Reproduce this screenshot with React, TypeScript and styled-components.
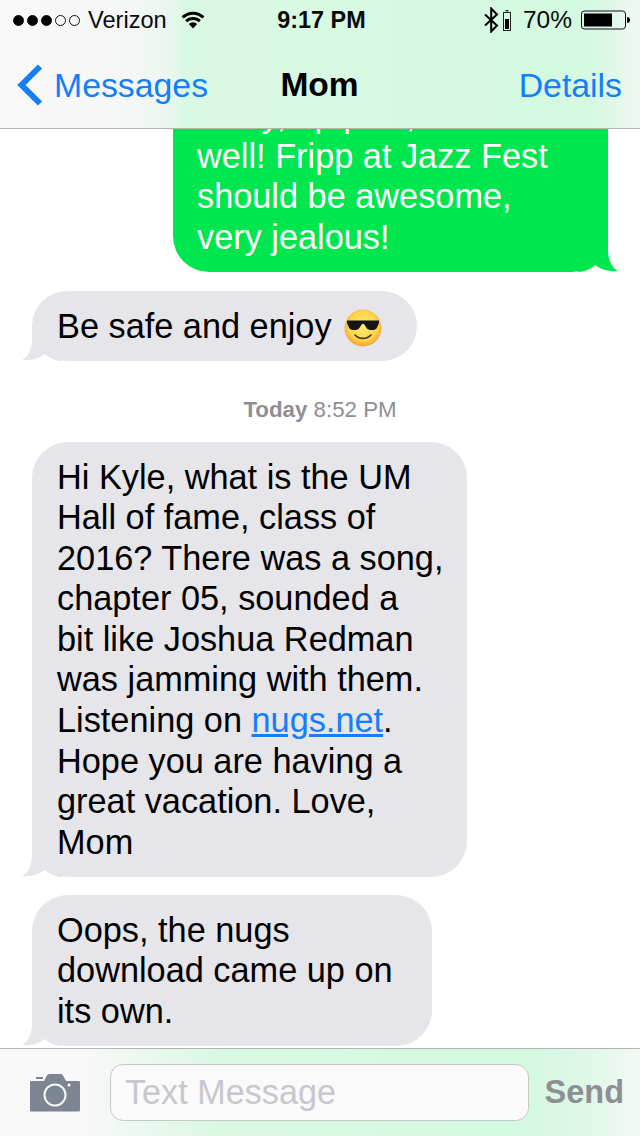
import { createGlobalStyle, styled } from "styled-components";

const GlobalStyle = createGlobalStyle`
  html, body {
    margin: 0;
    padding: 0;
    background: #fff;
  }
  body {
    font-family: "Liberation Sans", Arial, sans-serif;
  }
`;

const Phone = styled.div`
  width: 640px;
  height: 1136px;
  display: flex;
  flex-direction: column;
  overflow: hidden;
  background: #fff;
`;

const Header = styled.header`
  flex: none;
  height: 129px;
  box-sizing: border-box;
  border-bottom: 1px solid #b3b5b4;
  background: linear-gradient(90deg, #f8f8f8 0, #f5f7f6 120px, #ecf6f0 165px, #d9f8e3 185px, #d4f8e0 590px, #e0f7e8 612px, #eff8f3 640px);
`;

const StatusBar = styled.div`
  height: 40px;
  display: grid;
  grid-template-columns: 1fr auto 1fr;
  align-items: center;
  padding: 0 10px 0 13px;
  font-size: 23.6px;
  color: #0a0a0a;
`;

const StatusGroup = styled.div<{ $end?: boolean }>`
  display: flex;
  align-items: center;
  justify-content: ${(p) => (p.$end ? "flex-end" : "flex-start")};
`;

const Dot = styled.span<{ $on: boolean }>`
  width: 11px;
  height: 11px;
  box-sizing: border-box;
  margin-right: 3px;
  border-radius: 50%;
  border: 1px solid #111;
  background: ${(p) => (p.$on ? "#000" : "transparent")};
`;

const Carrier = styled.span`
  margin: 0 14px 0 5px;
`;

const Clock = styled.span`
  font-weight: 700;
  font-size: 23.4px;
`;

const Percent = styled.span`
  margin: 0 9px 0 12px;
  font-size: 24.5px;
`;

const NavBar = styled.nav`
  height: 88px;
  box-sizing: border-box;
  padding: 2px 18px 0 17px;
  display: grid;
  grid-template-columns: 1fr auto 1fr;
  align-items: center;
  font-size: 33.8px;
  color: #147efb;
`;

const BackLink = styled.div`
  display: flex;
  align-items: center;
  gap: 11px;
`;

const Title = styled.div`
  font-weight: 700;
  font-size: 33.5px;
  color: #000;
`;

const NavAction = styled.div`
  text-align: right;
`;

const Thread = styled.main`
  flex: 1;
  min-height: 0;
  overflow: hidden;
  display: flex;
  flex-direction: column;
  justify-content: flex-end;
  padding: 0 32px 2px;
`;

const Bubble = styled.div<{ $sent?: boolean; $gap?: number; $width: number }>`
  position: relative;
  z-index: 0;
  flex: none;
  box-sizing: border-box;
  width: ${(p) => p.$width}px;
  align-self: ${(p) => (p.$sent ? "flex-end" : "flex-start")};
  margin-top: ${(p) => p.$gap ?? 0}px;
  padding: 14.6px 0 14.6px ${(p) => (p.$sent ? 24 : 25)}px;
  border-radius: 36px;
  font-size: 34.3px;
  line-height: 40.6px;
  white-space: nowrap;
  color: ${(p) => (p.$sent ? "#fff" : "#000")};
  background: ${(p) => (p.$sent ? "#00e64f" : "#e5e5ea")};
`;

const Tail = styled.svg<{ $sent?: boolean }>`
  position: absolute;
  z-index: -1;
  bottom: 0;
  width: 40px;
  height: 37px;
  ${(p) => (p.$sent ? "right: -10px; transform: scaleX(-1);" : "left: -10px;")}
`;

const Emoji = styled.svg`
  width: 38px;
  height: 38px;
  margin-left: 12px;
  vertical-align: -9px;
`;

const NugsLink = styled.a`
  color: #147efb;
  text-decoration: underline;
`;

const Timestamp = styled.div`
  flex: none;
  margin: 36.5px 0 20px;
  text-align: center;
  font-size: 22.3px;
  line-height: 24px;
  color: #8e8e93;
  b {
    font-weight: 700;
  }
`;

const Composer = styled.footer`
  flex: none;
  height: 88px;
  box-sizing: border-box;
  border-top: 1px solid #b3b5b4;
  display: flex;
  align-items: center;
  padding: 0 16px 0 30px;
  background: linear-gradient(90deg, #f8f8f8 0, #f7f8f7 90px, #d9f8e3 220px, #d4f8e0 530px, #e0f7e8 590px, #f3f8f5 640px);
`;

const CameraIcon = styled.svg`
  flex: none;
  width: 50px;
  height: 38px;
  margin-right: 30px;
`;

const Field = styled.div`
  flex: 1;
  height: 57px;
  box-sizing: border-box;
  display: flex;
  align-items: center;
  padding-left: 14px;
  border: 1px solid #c4c8c6;
  border-radius: 13px;
  background: #fafafa;
  font-size: 34.2px;
  color: #c7c7cd;
`;

const SendButton = styled.div`
  flex: none;
  margin-left: 16px;
  font-size: 32.5px;
  font-weight: 700;
  color: #8e8e93;
`;

function BubbleTail({ sent }: { sent?: boolean }) {
  return (
    <Tail $sent={sent} viewBox="0 0 40 37">
      <path
        d="M10 0V15C10 25 6 33 0 36C8 37 16 35 23 30C27 34 32 36.500 40 37V0Z"
        fill={sent ? "#00e64f" : "#e5e5ea"}
      />
    </Tail>
  );
}

function WifiIcon() {
  return (
    <svg width="24" height="18" viewBox="0 0 24 18">
      <path d="M12 17.500 7.800 13a6 6 0 0 1 8.400 0Z" fill="#000" />
      <path d="M5.200 10.200a9.600 9.600 0 0 1 13.600 0" fill="none" stroke="#000" strokeWidth="3" />
      <path d="M1.600 6.400a14.800 14.800 0 0 1 20.800 0" fill="none" stroke="#000" strokeWidth="3" />
    </svg>
  );
}

function BluetoothIcon() {
  return (
    <svg width="15" height="26" viewBox="0 0 15 26">
      <path d="M1 7.500 13 18.500 7.200 24.500V1.500L13 7.500 1 18.500" fill="none" stroke="#000" strokeWidth="2" />
    </svg>
  );
}

function MiniBattery() {
  return (
    <svg width="8" height="21" viewBox="0 0 8 21" style={{ marginLeft: 4 }}>
      <rect x="2.500" y="0" width="3" height="1.500" fill="#333" />
      <rect x="0.500" y="2.500" width="7" height="18" fill="none" stroke="#222" />
      <rect x="2" y="9" width="4" height="10" fill="#000" />
    </svg>
  );
}

function Battery() {
  return (
    <svg width="49" height="20" viewBox="0 0 49 20">
      <rect x="0.500" y="1" width="44" height="18" rx="3" fill="none" stroke="#111" />
      <rect x="3" y="3.500" width="28" height="13" fill="#000" />
      <path d="M46 7c2 0 3 1 3 3s-1 3-3 3Z" fill="#000" />
    </svg>
  );
}

function Chevron() {
  return (
    <svg width="26" height="42" viewBox="0 0 26 42">
      <path d="M23 2.500 4.500 21 23 39.500" fill="none" stroke="#147efb" strokeWidth="6" />
    </svg>
  );
}

function Shades() {
  return (
    <Emoji viewBox="0 0 38 38">
      <defs>
        <radialGradient id="face" cx="0.5" cy="0.45" r="0.55">
          <stop offset="0" stopColor="#fdeb72" />
          <stop offset="0.7" stopColor="#fbd648" />
          <stop offset="1" stopColor="#f0a23a" />
        </radialGradient>
      </defs>
      <circle cx="19" cy="19" r="18.500" fill="url(#face)" />
      <path d="M3 11.500H35V14L32.500 19.500C30 21.500 25.500 21.500 23 19.500L20 15H18L15 19.500C12.500 21.500 8 21.500 5.500 19.500L3 14Z" fill="#151515" />
      <path d="M11 26C15 30.500 23 30.500 27 26" fill="none" stroke="#4a3010" strokeWidth="1.600" strokeLinecap="round" />
    </Emoji>
  );
}

function Camera() {
  return (
    <CameraIcon viewBox="0 0 50 38">
      <path
        fillRule="evenodd"
        fill="#7c8591"
        d="M6 3H13V5H6ZM1.500 7H14L17 1.500C17.500 0.500 18.500 0 20 0H30C31.500 0 32.500 0.500 33 1.500L36 7H48.500C49.500 7 50 7.500 50 8.500V36C50 37 49.500 37.500 48.500 37.500H1.500C0.500 37.500 0 37 0 36V8.500C0 7.500 0.500 7 1.500 7ZM25 9.500A11.500 11.500 0 1 0 25 32.500A11.500 11.500 0 1 0 25 9.500ZM25 11.500A9.500 9.500 0 1 1 25 30.500A9.500 9.500 0 1 1 25 11.500Z"
      />
      <circle cx="39" cy="11" r="1.500" fill="#fff" />
    </CameraIcon>
  );
}

export default function App() {
  return (
    <Phone>
      <GlobalStyle />
      <Header>
        <StatusBar>
          <StatusGroup>
            <Dot $on />
            <Dot $on />
            <Dot $on />
            <Dot $on={false} />
            <Dot $on={false} />
            <Carrier>Verizon</Carrier>
            <WifiIcon />
          </StatusGroup>
          <Clock>9:17 PM</Clock>
          <StatusGroup $end>
            <BluetoothIcon />
            <MiniBattery />
            <Percent>70%</Percent>
            <Battery />
          </StatusGroup>
        </StatusBar>
        <NavBar>
          <BackLink>
            <Chevron />
            Messages
          </BackLink>
          <Title>Mom</Title>
          <NavAction>Details</NavAction>
        </NavBar>
      </Header>
      <Thread>
        <Bubble $sent $width={435}>
          Sorry, up pals, as
          <br />
          well! Fripp at Jazz Fest
          <br />
          should be awesome,
          <br />
          very jealous!
          <BubbleTail sent />
        </Bubble>
        <Bubble $gap={19} $width={385}>
          Be safe and enjoy
          <Shades />
          <BubbleTail />
        </Bubble>
        <Timestamp>
          <b>Today</b> 8:52 PM
        </Timestamp>
        <Bubble $width={435}>
          Hi Kyle, what is the UM
          <br />
          Hall of fame, class of
          <br />
          2016? There was a song,
          <br />
          chapter 05, sounded a
          <br />
          bit like Joshua Redman
          <br />
          was jamming with them.
          <br />
          Listening on <NugsLink>nugs.net</NugsLink>.
          <br />
          Hope you are having a
          <br />
          great vacation. Love,
          <br />
          Mom
          <BubbleTail />
        </Bubble>
        <Bubble $gap={18} $width={400}>
          Oops, the nugs
          <br />
          download came up on
          <br />
          its own.
          <BubbleTail />
        </Bubble>
      </Thread>
      <Composer>
        <Camera />
        <Field>Text Message</Field>
        <SendButton>Send</SendButton>
      </Composer>
    </Phone>
  );
}
